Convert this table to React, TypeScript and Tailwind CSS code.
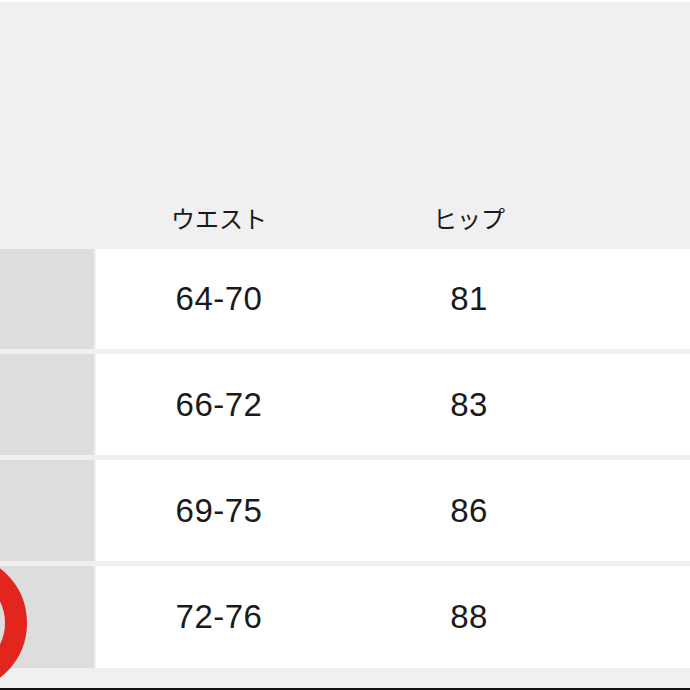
import React from "react";

const rows = [
  ["64-70", "81"],
  ["66-72", "83"],
  ["69-75", "86"],
  ["72-76", "88"],
];

const num = { fontFamily: '"Liberation Sans", Arial, sans-serif' };
const jp = { fontFamily: '"Noto Sans CJK JP", "Noto Sans", sans-serif' };

export default function App() {
  return (
    <div className="relative w-[690px] h-[690px] overflow-hidden bg-[#f0f0f0] flex flex-col">
      <div className="h-[2px] bg-white" />
      <div className="h-[247px] flex items-end pb-[19px] text-[#1a1a1a] text-[24px] font-normal" style={jp}>
        <div className="w-[96px]" />
        <div className="w-[246px] text-center leading-none">ウエスト</div>
        <div className="w-[254px] text-center leading-none">ヒップ</div>
      </div>
      <div className="flex flex-col gap-[5px]">
        {rows.map(([w, h], i) => (
          <div key={i} className={`flex gap-[2px] ${i === 3 ? "h-[102px]" : i === 0 ? "h-[100px]" : "h-[101px]"}`}>
            <div className="w-[94px] bg-[#dddddd]" />
            <div className="flex-1 bg-white flex items-center text-[33px] text-[#1a1a1a] tracking-[0.5px]" style={num}>
              <div className="w-[246px] text-center">{w}</div>
              <div className="w-[254px] text-center">{h}</div>
            </div>
          </div>
        ))}
      </div>
      <div className="flex-1" />
      <div className="h-[2px] bg-[#111]" />
      <svg className="absolute left-0 top-0" width="690" height="690">
        <circle cx="-42" cy="623" r="58" fill="none" stroke="#e2261d" strokeWidth="22" />
      </svg>
    </div>
  );
}
